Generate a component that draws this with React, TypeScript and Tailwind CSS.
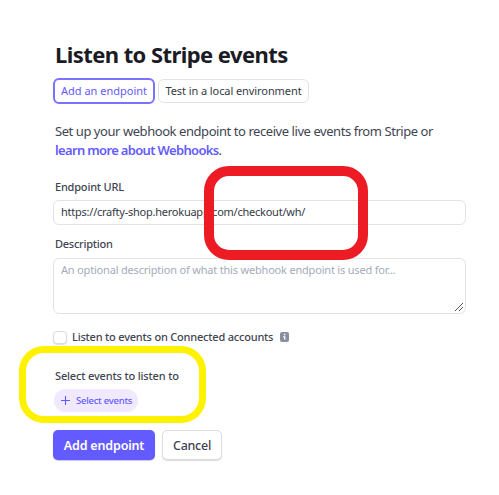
import React from "react";

function Highlight({ className }: { className: string }) {
  return <div aria-hidden="true" className={`pointer-events-none absolute ${className}`} />;
}

function InfoIcon() {
  return (
    <svg width="9" height="10" viewBox="0 0 9 10" className="ml-[7px] shrink-0">
      <rect width="9" height="10" rx="2" fill="#87909f" />
      <path d="M3.9 1.8h1.5v1.5H3.9zM3 4.2h2.4v3.4H4V5.2H3z" fill="#fff" />
    </svg>
  );
}

export default function App() {
  return (
    <main className="relative flex h-[495px] w-[499px] flex-col items-start overflow-hidden bg-white pl-[53px] pt-[39px] font-['Noto_Sans','Open_Sans',sans-serif] text-[#3c4257]">
      <h1 className="ml-[2px] h-[30px] whitespace-nowrap text-[22px] font-bold leading-[30px] tracking-[-0.57px] text-[#1a1b25]">
        Listen to Stripe events
      </h1>

      <div className="mt-[9px] flex h-[26px] items-center gap-[3px]">
        <button className="h-[26px] w-[102px] whitespace-nowrap rounded-[6px] border-2 border-[#7a73ff] text-[11px] leading-[20px] text-[#635bff]">
          Add an endpoint
        </button>
        <button className="h-[24px] w-[151px] whitespace-nowrap rounded-[6px] border border-[#e3e3e6] text-[11px] leading-[20px] tracking-[-0.08px] text-[#353a44]">
          Test in a local environment
        </button>
      </div>

      <p className="ml-[2px] mt-[18px] whitespace-nowrap text-[13px] leading-[19px] tracking-[-0.44px] text-[#414552]">
        Set up your webhook endpoint to receive live events from Stripe or
        <br />
        <a className="font-semibold tracking-[-0.66px] text-[#635bff]">learn more about Webhooks</a>.
      </p>

      <label className="ml-[2px] mt-[18px] h-[18px] whitespace-nowrap text-[11px] font-medium leading-[18px] tracking-[-0.2px] text-[#414552]">
        Endpoint URL
      </label>
      <div className="mt-[4px] flex h-[25px] w-[413px] items-center rounded-[6px] border border-[#e2e3e5] pl-[7px] text-[11px] tracking-[-0.24px] text-[#353a44]">
        <span className="whitespace-nowrap">https://crafty-shop.herokuapp.com/checkout/wh/</span>
      </div>

      <label className="ml-[2px] mt-[10px] h-[18px] whitespace-nowrap text-[11px] font-medium leading-[18px] tracking-[-0.25px] text-[#414552]">
        Description
      </label>
      <div className="mt-[5px] flex h-[56px] w-[413px] items-start justify-between rounded-[6px] border border-[#e2e3e5] pl-[7px] text-[11px] tracking-[-0.19px] text-[#a3acba]">
        <span className="mt-[2px] whitespace-nowrap leading-[18px]">
          An optional description of what this webhook endpoint is used for...
        </span>
        <svg width="9" height="9" viewBox="0 0 9 9" className="mb-px mr-px self-end" shapeRendering="crispEdges">
          <path
            d="M0 7h1v1H0zM1 6h1v1H1zM2 5h1v1H2zM3 4h1v1H3zM4 3h1v1H4zM5 2h1v1H5zM6 1h1v1H6zM7 0h1v1H7zM4 7h1v1H4zM5 6h1v1H5zM6 5h1v1H6zM7 4h1v1H7z"
            fill="#555"
          />
        </svg>
      </div>

      <div className="mt-[14px] flex h-[18px] items-center">
        <span className="h-[13px] w-[14px] rounded-[4px] border border-[#d8dbe0] bg-white shadow-[0_1px_1px_rgba(0,0,0,0.12)]" />
        <span className="ml-[5px] whitespace-nowrap text-[11px] font-medium leading-[18px] tracking-[-0.2px] text-[#414552]">
          Listen to events on Connected accounts
        </span>
        <InfoIcon />
      </div>

      <div className="ml-[2px] mt-[21px] h-[18px] whitespace-nowrap text-[11px] font-medium leading-[18px] tracking-[-0.16px] text-[#414552]">
        Select events to listen to
      </div>
      <button className="ml-px mt-[4px] flex h-[23px] w-[84px] items-center rounded-full bg-[#f0e9ff] pl-[7px] text-[9.5px] font-medium tracking-[-0.25px] text-[#635bff]">
        <svg width="9" height="9" viewBox="0 0 9 9" className="mr-[6px] shrink-0">
          <path d="M4.5 0v9M0 4.5h9" stroke="#635bff" strokeWidth="1.1" />
        </svg>
        <span className="mt-px whitespace-nowrap">Select events</span>
      </button>

      <div className="mt-[18px] flex gap-[7px]">
        <button className="h-[30px] w-[102px] whitespace-nowrap rounded-[5px] bg-[#635bff] pt-[2px] text-[12.5px] font-semibold tracking-[-0.17px] text-white shadow-[0_1px_1px_rgba(40,30,120,0.25)]">
          Add endpoint
        </button>
        <button className="h-[30px] w-[60px] whitespace-nowrap rounded-[5px] border border-[#dcdde1] bg-white pt-[2px] text-[12.5px] font-medium tracking-[-0.25px] text-[#414552] shadow-[0_1px_1px_rgba(0,0,0,0.14)]">
          Cancel
        </button>
      </div>

      <Highlight className="left-[204px] top-[166px] h-[94px] w-[164px] rounded-[25px] border-[10px] border-[#ed1c24]" />
      <Highlight className="left-[19px] top-[346px] h-[77px] w-[187px] rounded-[25px] border-[7px] border-[#fff200]" />
    </main>
  );
}
